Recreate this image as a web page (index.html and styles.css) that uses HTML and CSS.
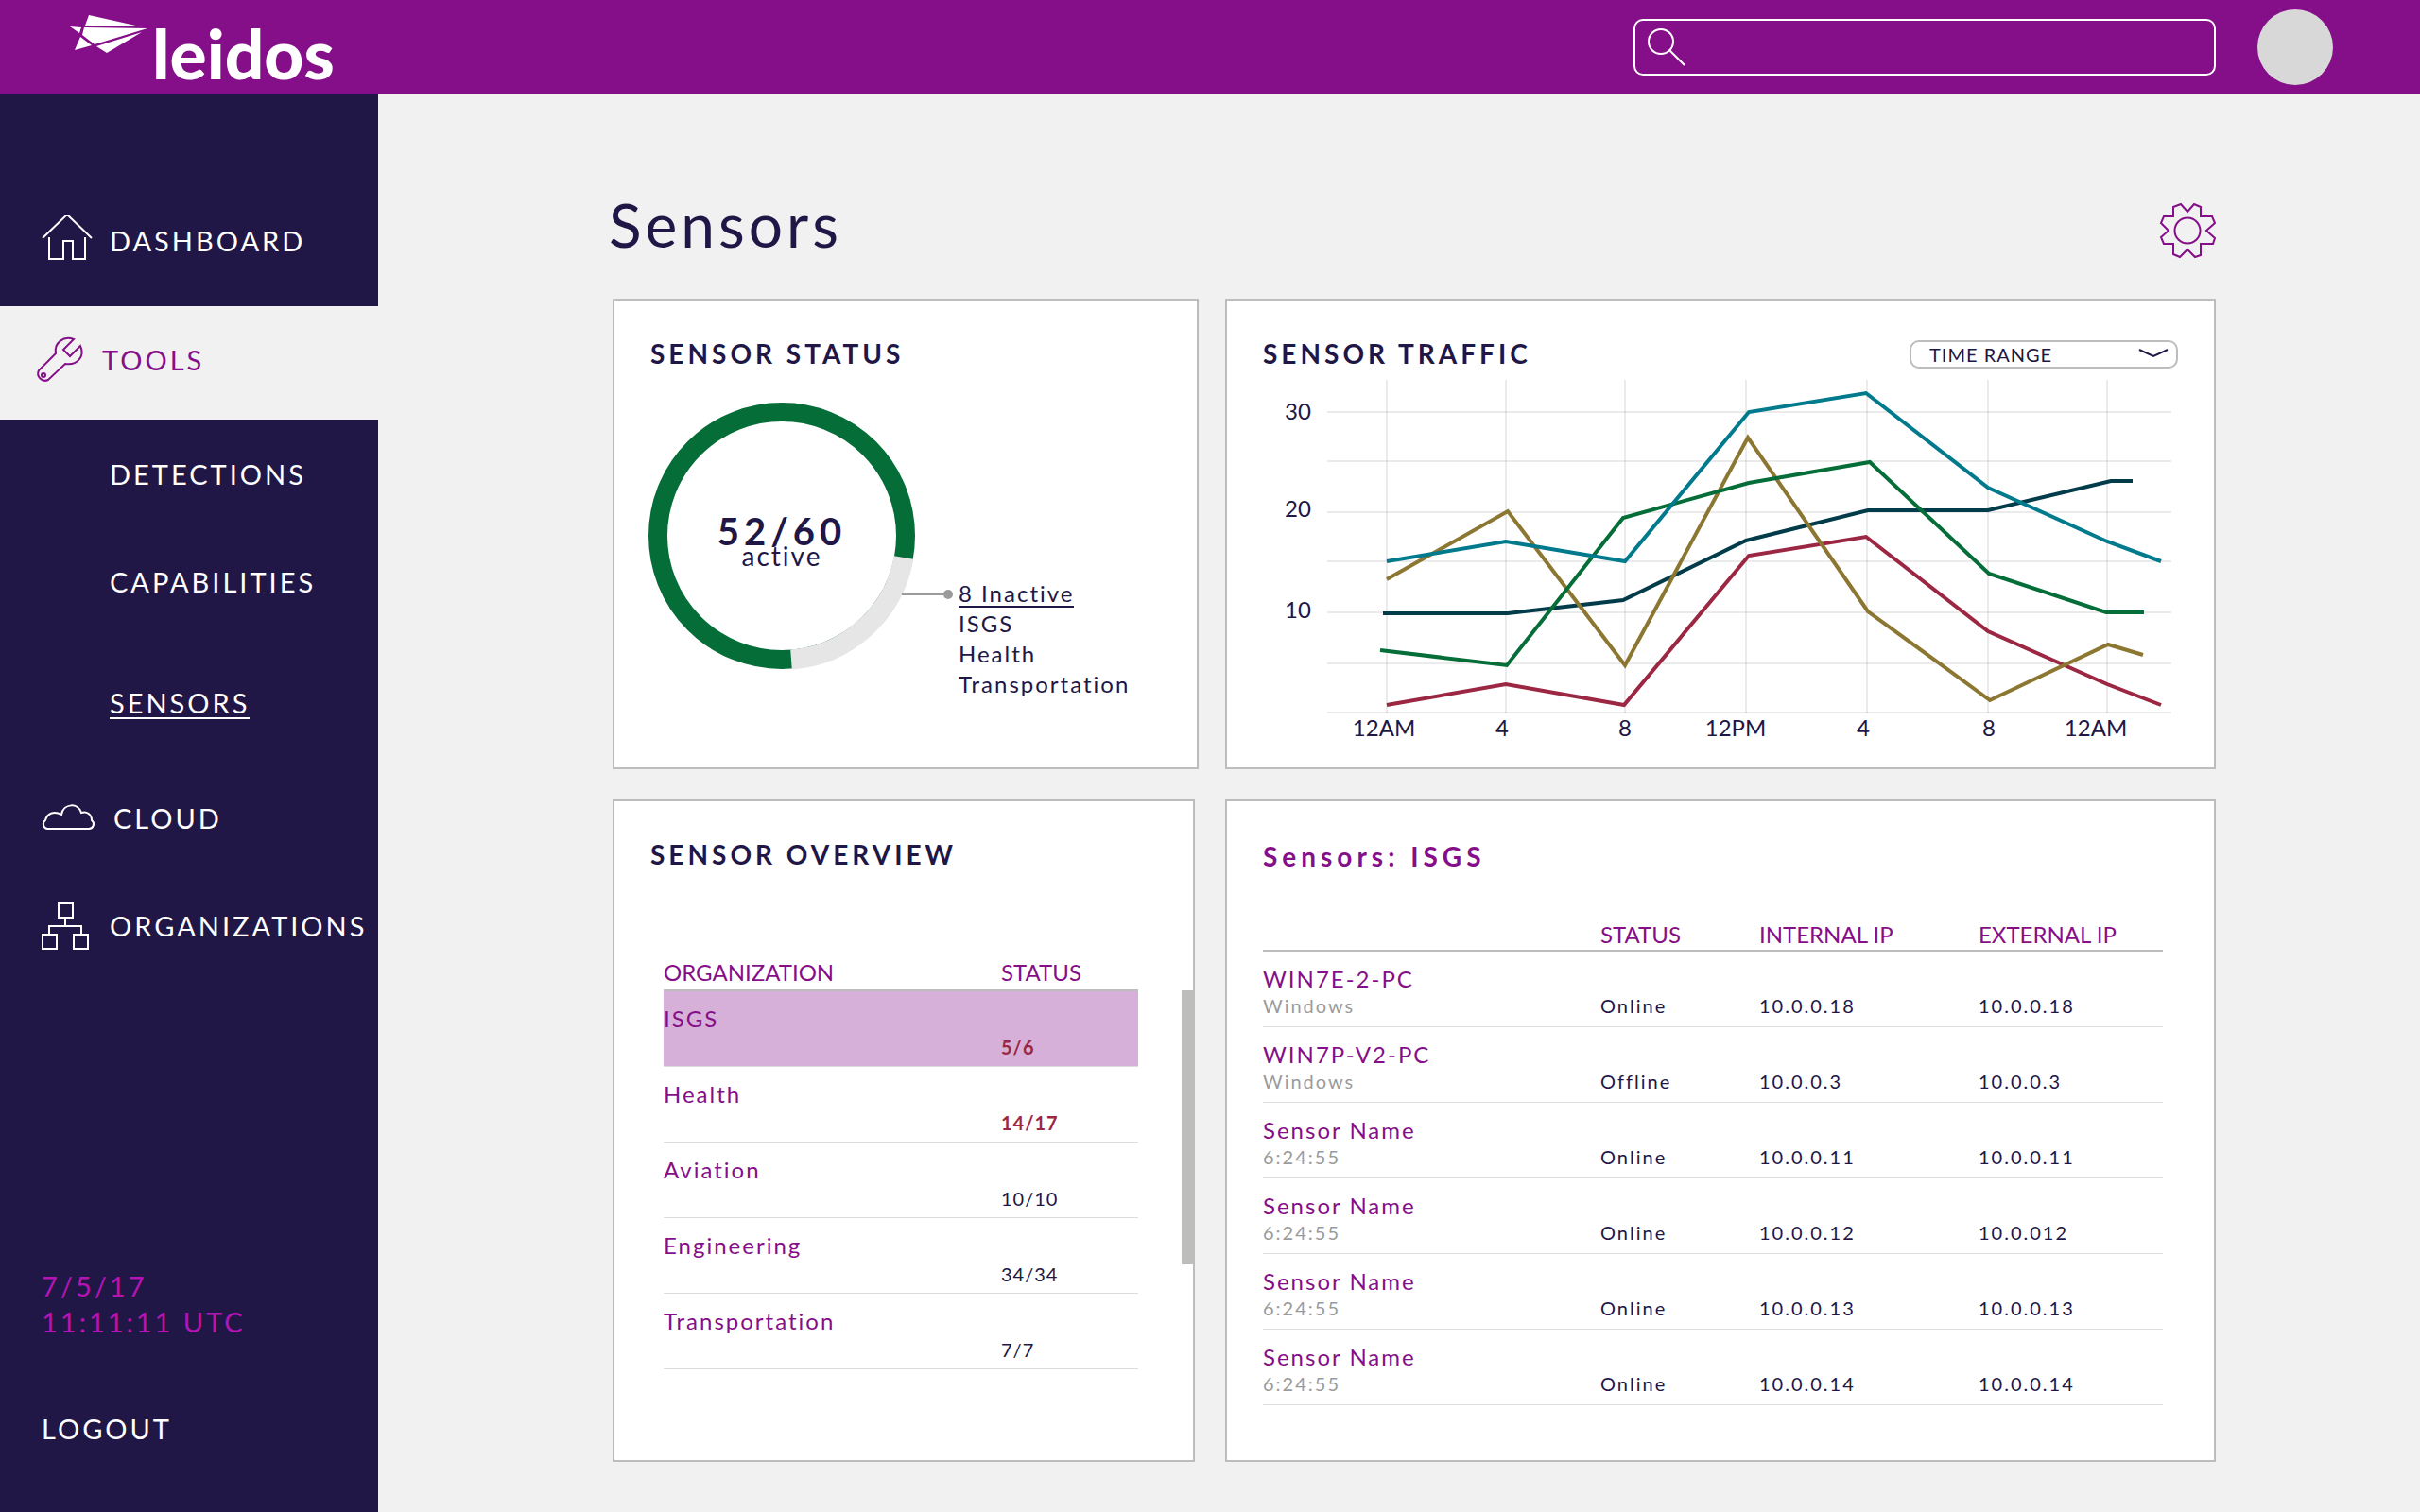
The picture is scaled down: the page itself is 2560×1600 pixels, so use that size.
FILE: index.html
```html
<!DOCTYPE html>
<html lang="en">
<head>
<meta charset="utf-8">
<title>Sensors</title>
<link rel="stylesheet" href="styles.css">
</head>
<body>
<header class="topbar">
  <a class="logo" href="#" aria-label="leidos">
    <svg class="logo-mark" viewBox="0 0 82 40" width="82" height="40" aria-hidden="true">
      <path d="M20 0L74 12L16 11z"/>
      <path d="M15 13L82 14L26 31L13 21z"/>
      <path d="M0 12L12 13L10 19z"/>
      <path d="M11 23L23 32L5 37z"/>
      <path d="M28 33L76 18L39 40z"/>
    </svg>
    <span class="logo-name">leidos</span>
  </a>
  <div class="topbar-right">
    <label class="search">
      <svg viewBox="0 0 42 42" width="42" height="42" aria-hidden="true"><circle cx="15" cy="15" r="13"/><path d="M24 24L40 40"/></svg>
      <input type="search" aria-label="Search">
    </label>
    <button class="avatar" type="button" aria-label="Account"></button>
  </div>
</header>

<div class="shell">
  <aside class="sidebar">
    <nav class="nav">
      <a class="nav-item nav-home" href="#">
        <svg viewBox="0 3 56 52" width="56" height="52" aria-hidden="true"><path d="M1 27L27 2L53 27M8 26V49H23V30H33V49H46V26"/></svg>
        <span>DASHBOARD</span>
      </a>
      <a class="nav-item nav-current" href="#">
        <svg viewBox="0 0 56 52" width="56" height="52" aria-hidden="true"><path d="M23 20L5 38A7.500 7.500 0 0 0 15 48L33 31C46 33 54 23 49 12L38 23L31 16L42 5C31 1 21 9 23 20z"/><circle cx="10" cy="43" r="2"/></svg>
        <span>TOOLS</span>
      </a>
      <a class="nav-item nav-sub" href="#"><span>DETECTIONS</span></a>
      <a class="nav-item nav-sub" href="#"><span>CAPABILITIES</span></a>
      <a class="nav-item nav-sub nav-selected" href="#"><span>SENSORS</span></a>
      <a class="nav-item nav-section" href="#">
        <svg viewBox="0 0 60 28" width="60" height="28" aria-hidden="true"><path d="M6 26A5 5 0 0 1 4 17C6 9 14 7 21 11C23 -1 39 -2 42 9C48 7 53 11 53 17A5 5 0 0 1 50 26z"/></svg>
        <span>CLOUD</span>
      </a>
      <a class="nav-item" href="#">
        <svg viewBox="0 -2 56 52" width="56" height="52" aria-hidden="true"><path d="M18 1H33V16H18zM1 34H16V49H1zM34 34H49V49H34zM25 16V25M8 34V25H42V34"/></svg>
        <span>ORGANIZATIONS</span>
      </a>
    </nav>
    <div class="session">
      <p class="clock"><time>7/5/17<br>11:11:11 UTC</time></p>
      <a class="logout" href="#">LOGOUT</a>
    </div>
  </aside>

  <main class="main">
    <div class="page-head">
      <h1>Sensors</h1>
      <button class="gear" type="button" aria-label="Settings">
        <svg viewBox="0 0 60 60" width="60" height="60" aria-hidden="true"><circle cx="30" cy="30" r="13.500"/><path d="M30 10L37 2L44 5V15L56 15L59 22L50 30L59 38L57 44H44V56L38 58L30 50L22 58L15 55V44H5L2 37L10 30L2 22L5 15H15V5L23 2z"/></svg>
      </button>
    </div>

    <div class="row row-top">
      <section class="card status-card">
        <h2>SENSOR STATUS</h2>
        <div class="status-body">
          <div class="ring">
            <svg viewBox="0 0 318 282" aria-hidden="true">
              <circle class="ring-active" cx="141" cy="141" r="131"/>
              <path class="ring-inactive" d="M270 164A131 131 0 0 1 151 272"/>
              <path class="ring-lead" d="M268 203H314"/>
              <circle class="ring-dot" cx="317" cy="203" r="5"/>
            </svg>
            <p class="ring-label"><strong>52/60</strong><span>active</span></p>
          </div>
          <div class="inactive">
            <a href="#">8 Inactive</a>
            <ul><li>ISGS</li><li>Health</li><li>Transportation</li></ul>
          </div>
        </div>
      </section>

      <section class="card traffic-card">
        <div class="traffic-head">
          <h2>SENSOR TRAFFIC</h2>
          <div class="range">
            <select aria-label="Time range"><option>TIME RANGE</option></select>
            <svg viewBox="0 0 32 10" width="32" height="10" aria-hidden="true"><path d="M1 1L16 8L31 1"/></svg>
          </div>
        </div>
        <svg class="chart" viewBox="1336 400 968 390" role="img" aria-label="Sensor traffic by hour">
          <path class="grid" d="M1467 402V755M1593 402V755M1719 402V755M1847 402V755M1975 402V755M2103 402V755M2229 402V755"/>
          <path class="grid" d="M1404 436H2297M1404 488H2297M1404 542H2297M1404 594H2297M1404 648H2297M1404 702H2297M1404 754H2297"/>
          <g class="lines">
            <path class="navy" d="M1463 649H1595L1717 635L1847 572L1976 540H2103L2233 509H2256"/>
            <path class="red" d="M1467 746L1593 724L1718 746L1850 588L1974 568L2103 668L2229 724L2286 746"/>
            <path class="gold" d="M1467 613L1595 541L1719 704L1849 463L1976 647L2105 741L2230 682L2267 693"/>
            <path class="green" d="M1460 688L1594 704L1717 548L1850 511L1978 489L2104 607L2228 648H2268"/>
            <path class="teal" d="M1467 594L1593 573L1719 594L1850 436L1974 416L2103 516L2229 573L2286 594"/>
          </g>
          <g class="axis">
            <text x="1373" y="444">30</text><text x="1373" y="547">20</text><text x="1373" y="654">10</text>
            <text x="1464" y="779">12AM</text><text x="1589" y="779">4</text><text x="1719" y="779">8</text><text x="1836" y="779">12PM</text><text x="1971" y="779">4</text><text x="2104" y="779">8</text><text x="2217" y="779">12AM</text>
          </g>
        </svg>
      </section>
    </div>

    <div class="row row-bottom">
      <section class="card overview-card">
        <h2>SENSOR OVERVIEW</h2>
        <div class="overview-body">
          <table class="overview">
            <thead><tr><th>ORGANIZATION</th><th>STATUS</th></tr></thead>
            <tbody>
              <tr class="picked"><td>ISGS</td><td class="short">5/6</td></tr>
              <tr><td>Health</td><td class="short">14/17</td></tr>
              <tr><td>Aviation</td><td>10/10</td></tr>
              <tr><td>Engineering</td><td>34/34</td></tr>
              <tr><td>Transportation</td><td>7/7</td></tr>
            </tbody>
          </table>
          <div class="scroll-thumb"></div>
        </div>
      </section>

      <section class="card detail-card">
        <h2>Sensors: ISGS</h2>
        <table class="detail">
          <thead><tr><th aria-label="Sensor"></th><th>STATUS</th><th>INTERNAL IP</th><th>EXTERNAL IP</th></tr></thead>
          <tbody>
            <tr><td><b>WIN7E-2-PC</b><small>Windows</small></td><td>Online</td><td>10.0.0.18</td><td>10.0.0.18</td></tr>
            <tr><td><b>WIN7P-V2-PC</b><small>Windows</small></td><td>Offline</td><td>10.0.0.3</td><td>10.0.0.3</td></tr>
            <tr><td><b>Sensor Name</b><small>6:24:55</small></td><td>Online</td><td>10.0.0.11</td><td>10.0.0.11</td></tr>
            <tr><td><b>Sensor Name</b><small>6:24:55</small></td><td>Online</td><td>10.0.0.12</td><td>10.0.012</td></tr>
            <tr><td><b>Sensor Name</b><small>6:24:55</small></td><td>Online</td><td>10.0.0.13</td><td>10.0.0.13</td></tr>
            <tr><td><b>Sensor Name</b><small>6:24:55</small></td><td>Online</td><td>10.0.0.14</td><td>10.0.0.14</td></tr>
          </tbody>
        </table>
      </section>
    </div>
  </main>
</div>
</body>
</html>
```
FILE: styles.css
```css
:root {
  --purple: #850f88;
  --ink: #201747;
  --page: #f1f1f1;
  --edge: #bdbdbd;
  --hair: #dcdcdc;
  --red: #9b2743;
  --green: #046d38;
}

* { box-sizing: border-box; margin: 0; padding: 0; }

body {
  min-height: 100vh;
  display: flex;
  flex-direction: column;
  background: var(--page);
  color: var(--ink);
  font-family: Lato, "Open Sans", sans-serif;
  font-size: 24px;
}

a { color: inherit; text-decoration: none; }
button { border: 0; background: none; cursor: pointer; }
ul { list-style: none; }
svg { display: block; flex: none; fill: none; }

/* top bar */
.topbar {
  display: flex;
  align-items: center;
  justify-content: space-between;
  height: 100px;
  padding: 0 92px 0 74px;
  background: var(--purple);
}
.logo { display: flex; align-items: flex-start; gap: 5px; height: 68px; color: #fff; }
.logo-mark { fill: #fff; }
.logo-name { font-size: 73px; font-weight: 900; line-height: 80px; }
.topbar-right { display: flex; align-items: center; gap: 44px; }
.search {
  display: flex;
  align-items: center;
  width: 616px;
  height: 60px;
  padding: 0 12px;
  border: 2px solid #fff;
  border-radius: 10px;
}
.search svg { stroke: #fff; stroke-width: 2; }
.search input {
  flex: 1;
  height: 40px;
  margin-left: 12px;
  border: 0;
  outline: 0;
  background: none;
  color: #fff;
  font: inherit;
}
.avatar { width: 80px; height: 80px; border-radius: 50%; background: #d8d8d8; }

/* sidebar */
.shell { flex: 1; display: flex; }
.sidebar {
  flex: none;
  display: flex;
  flex-direction: column;
  width: 400px;
  padding-top: 84px;
  background: var(--ink);
  color: #fff;
  font-size: 29px;
  letter-spacing: 3px;
}
.nav-item {
  display: flex;
  align-items: center;
  gap: 16px;
  height: 114px;
  padding-left: 44px;
}
.nav-item svg { stroke: currentColor; stroke-width: 2; }
.nav-home { height: 140px; }
.nav-current {
  height: 120px;
  padding: 0 0 8px 36px;
  background: var(--page);
  color: var(--purple);
}
.nav-sub { padding-left: 116px; }
.nav-selected { margin-top: 16px; }
.nav-selected span { border-bottom: 2px solid #fff; line-height: 30px; }
.nav-section { margin-top: 6px; }
.session { margin-top: auto; padding: 0 44px 72px; }
.clock { margin-bottom: 78px; color: #b514b5; line-height: 38px; }
.logout { line-height: 32px; display: block; }

/* page */
.main { flex: 1; min-width: 0; padding: 96px 216px 52px 248px; }
.page-head {
  display: flex;
  justify-content: space-between;
  align-items: center;
  height: 96px;
  margin-bottom: 24px;
}
h1 { margin: -12px 0 0 -4px; font-size: 64px; font-weight: 400; line-height: 80px; letter-spacing: 4px; }
.gear svg { stroke: var(--purple); stroke-width: 2; }

.row { display: grid; }
.row-top { grid-template-columns: 620fr 1048fr; gap: 28px; margin-bottom: 32px; }
.row-bottom { grid-template-columns: 616fr 1048fr; gap: 32px; }
.card { min-width: 0; border: 2px solid var(--edge); background: #fff; }
h2 { font-size: 28px; font-weight: 700; line-height: 36px; letter-spacing: 4px; }

/* sensor status */
.status-card { padding: 38px; padding-right: 0; }
.status-body { display: flex; margin-top: 34px; }
.ring { position: relative; width: 318px; margin-left: -2px; }
.ring svg { overflow: visible; }
.ring-active { stroke: var(--green); stroke-width: 20; }
.ring-inactive { stroke: #e6e6e6; stroke-width: 21; }
.ring-lead { stroke: #9b9b9b; stroke-width: 2; }
.ring-dot { fill: #9b9b9b; }
.ring-label {
  position: absolute;
  top: 122px;
  left: 0;
  width: 282px;
  text-align: center;
}
.ring-label strong { display: block; font-size: 40px; line-height: 28px; letter-spacing: 5px; }
.ring-label span { display: block; font-size: 28px; line-height: 24px; letter-spacing: 2px; }
.inactive { margin: 186px 0 0 10px; line-height: 32px; letter-spacing: 2px; }
.inactive a { display: block; width: fit-content; margin: 3px 0 1px; line-height: 26px; border-bottom: 2px solid var(--ink); }

/* sensor traffic */
.traffic-card { padding: 38px 38px 22px; }
.traffic-head { display: flex; justify-content: space-between; align-items: center; height: 36px; }
.range { position: relative; width: 284px; }
.range select {
  appearance: none;
  width: 100%;
  height: 30px;
  padding: 0 48px 0 19px;
  border: 2px solid var(--edge);
  border-radius: 10px;
  background: #fff;
  color: var(--ink);
  font: 20px/26px Lato, sans-serif;
  letter-spacing: 1px;
}
.range svg { position: absolute; top: 10px; right: 10px; stroke: var(--ink); stroke-width: 2; pointer-events: none; }
.chart { width: 100%; margin-top: 8px; }
.grid { stroke: rgba(0, 0, 0, .08); stroke-width: 2; }
.lines { stroke-width: 4; }
.navy { stroke: #023c4b; }
.red { stroke: var(--red); }
.gold { stroke: #8c7732; }
.green { stroke: var(--green); }
.teal { stroke: #007a8c; }
.axis { fill: var(--ink); font-size: 24px; text-anchor: middle; }

/* tables */
table { border-collapse: collapse; table-layout: fixed; }
th { color: var(--purple); font-weight: 400; text-align: left; vertical-align: bottom; line-height: 32px; }
td { height: 80px; border-bottom: 1px solid var(--hair); }

.overview-card { padding: 38px 0; }
.overview-card h2 { padding-left: 38px; }
.overview-body { display: flex; align-items: flex-start; justify-content: space-between; padding-left: 52px; }
.overview { width: 502px; margin-top: 60px; letter-spacing: 2px; }
.overview th { height: 66px; padding-bottom: 2px; border-bottom: 2px solid var(--edge); letter-spacing: 0; }
.overview th:last-child { width: 145px; }
.overview td:first-child { padding-top: 11px; color: var(--purple); vertical-align: top; line-height: 36px; }
.overview td:last-child { padding-bottom: 6px; vertical-align: bottom; font-size: 20px; line-height: 28px; letter-spacing: 1px; }
.overview .picked { background: #d6b0d8; }
.overview .short { color: var(--red); font-weight: 700; }
.scroll-thumb { width: 14px; height: 290px; margin: 126px -2px 0 0; background: #bdbdbb; }

.detail-card { padding: 40px 54px 58px 38px; }
.detail-card h2 { color: var(--purple); letter-spacing: 5px; }
.detail { width: 100%; letter-spacing: 2px; }
.detail th { height: 82px; padding-bottom: 0; border-bottom: 2px solid var(--edge); letter-spacing: 0; }
.detail th:nth-child(2) { width: 168px; }
.detail th:nth-child(3) { width: 232px; }
.detail th:nth-child(4) { width: 195px; }
.detail td { padding-bottom: 8px; vertical-align: bottom; font-size: 20px; line-height: 28px; }
.detail b { display: block; color: var(--purple); font-size: 24px; font-weight: 400; line-height: 28px; }
.detail small { display: block; color: #9b9b9b; font-size: 20px; line-height: 28px; }
```
